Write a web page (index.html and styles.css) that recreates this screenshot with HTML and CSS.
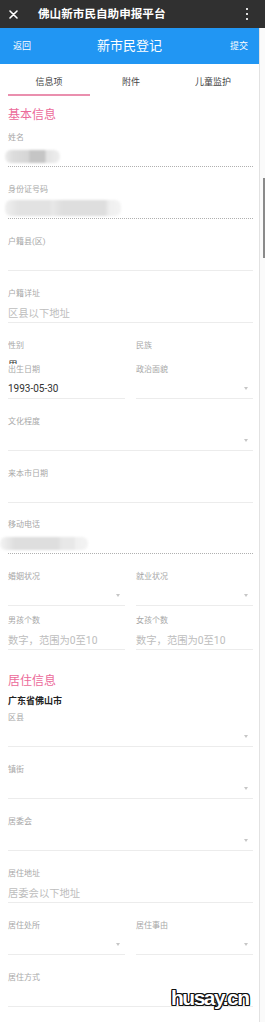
FILE: index.html
```html
<!DOCTYPE html>
<html lang="zh-CN">
<head>
<meta charset="utf-8">
<title>新市民登记</title>
<link rel="stylesheet" href="styles.css">
</head>
<body>
<div class="statusbar">
  <svg class="close" width="9" height="9" viewBox="0 0 9 9"><path d="M1 1L8 8M8 1L1 8" stroke="#fff" stroke-width="1.6" stroke-linecap="round"/></svg>
  <span class="st-title">佛山新市民自助申报平台</span>
  <span class="kebab"><i></i><i></i><i></i></span>
</div>
<div class="page">
  <div class="app">
    <header class="navbar">
      <span class="nav-btn left">返回</span>
      <span class="nav-title">新市民登记</span>
      <span class="nav-btn right">提交</span>
    </header>
    <nav class="tabs">
      <span class="tab active">信息项</span>
      <span class="tab">附件</span>
      <span class="tab">儿童监护</span>
    </nav>
    <main class="form">
      <h2 class="section-title">基本信息</h2>
      <div class="field dotted"><label>姓名</label><div class="input"><span class="blur blur-name"></span></div></div>
      <div class="field dotted"><label>身份证号码</label><div class="input"><span class="blur blur-id"></span></div></div>
      <div class="field"><label>户籍县(区)</label><div class="input"></div></div>
      <div class="field"><label>户籍详址</label><div class="input"><span class="ph">区县以下地址</span></div></div>
      <div class="row clip">
        <div class="field"><label>性别</label><div class="input"><span class="val">男</span></div></div>
        <div class="field"><label>民族</label><div class="input"></div></div>
      </div>
      <div class="row">
        <div class="field"><label>出生日期</label><div class="input"><span class="val">1993-05-30</span></div></div>
        <div class="field"><label>政治面貌</label><div class="input"><span class="caret"></span></div></div>
      </div>
      <div class="field"><label>文化程度</label><div class="input"><span class="caret"></span></div></div>
      <div class="field tight"><label>来本市日期</label><div class="input"></div></div>
      <div class="field dotted"><label>移动电话</label><div class="input"><span class="blur blur-phone"></span></div></div>
      <div class="row compact">
        <div class="field"><label>婚姻状况</label><div class="input"><span class="caret"></span></div></div>
        <div class="field"><label>就业状况</label><div class="input"><span class="caret"></span></div></div>
      </div>
      <div class="row last">
        <div class="field"><label>男孩个数</label><div class="input"><span class="ph">数字，范围为0至10</span></div></div>
        <div class="field"><label>女孩个数</label><div class="input"><span class="ph">数字，范围为0至10</span></div></div>
      </div>
      <h2 class="section-title second">居住信息</h2>
      <div class="city">广东省佛山市</div>
      <div class="field"><label>区县</label><div class="input"><span class="caret"></span></div></div>
      <div class="field"><label>镇街</label><div class="input"><span class="caret"></span></div></div>
      <div class="field"><label>居委会</label><div class="input"><span class="caret"></span></div></div>
      <div class="field"><label>居住地址</label><div class="input"><span class="ph">居委会以下地址</span></div></div>
      <div class="row">
        <div class="field"><label>居住处所</label><div class="input"><span class="caret"></span></div></div>
        <div class="field"><label>居住事由</label><div class="input"><span class="caret"></span></div></div>
      </div>
      <div class="field"><label>居住方式</label><div class="input"><span class="caret"></span></div></div>
    </main>
  </div>
  <div class="edge"><div class="edge-mark"></div></div>
</div>
<div class="watermark">husay.cn</div>
</body>
</html>
```
FILE: styles.css
```css
* { box-sizing: border-box; }
html, body { margin: 0; padding: 0; }
body {
  width: 265px;
  height: 1022px;
  overflow: hidden;
  background: #fff;
  font-family: Roboto, "Noto Sans CJK SC", sans-serif;
  color: #333;
  position: relative;
}
.statusbar {
  height: 28px;
  background: #303030;
  display: flex;
  align-items: center;
  color: #fff;
}
.close { margin-left: 9px; flex: none; }
.st-title {
  margin-left: 20px;
  font-size: 11.6px;
  font-weight: bold;
  letter-spacing: 0;
  line-height: 14px;
}
.kebab {
  margin-left: auto;
  margin-right: 17px;
  display: flex;
  flex-direction: column;
  gap: 3px;
}
.kebab i { display: block; width: 2px; height: 2px; background: #ddd; }
.page { display: flex; }
.app { width: 259px; flex: none; }
.edge {
  width: 6px;
  border-left: 1px solid #e2e2e2;
  background: #fafafa;
}
.edge-mark {
  margin-top: 150px;
  margin-left: 3px;
  width: 2px;
  height: 80px;
  background: #8a8a8a;
}
.navbar {
  height: 36px;
  background: #2196f3;
  display: grid;
  grid-template-columns: 1fr auto 1fr;
  align-items: center;
  color: #fff;
}
.nav-btn { font-size: 9px; line-height: 12px; }
.nav-btn.left { justify-self: start; padding-left: 13px; }
.nav-btn.right { justify-self: end; padding-right: 11px; }
.nav-title { font-size: 13px; line-height: 16px; }
.tabs {
  display: grid;
  grid-template-columns: 82px 82px 82px;
  padding-left: 8px;
  height: 32px;
}
.tab {
  display: flex;
  align-items: center;
  justify-content: center;
  font-size: 9px;
  color: #444;
  padding-top: 4px;
  border-bottom: 2px solid transparent;
}
.tab.active { border-bottom-color: #ea8fae; }
.form { padding: 0 6px 0 8px; }
.section-title {
  margin: 0 0 9px;
  padding-top: 11px;
  font-size: 12px;
  line-height: 16px;
  font-weight: normal;
  color: #ec6a9a;
}
.section-title.second { padding-top: 23px; margin-bottom: 0; }
.city {
  margin: 6px 0 5px;
  font-size: 9px;
  line-height: 12px;
  font-weight: bold;
  color: #222;
}
.field {
  border-bottom: 1px solid #ececec;
  margin-bottom: 17px;
}
.field.dotted { border-bottom: 1px dotted #b0b0b0; }
.field.tight { margin-bottom: 16px; }
.field label {
  display: block;
  font-size: 8px;
  line-height: 11px;
  color: #a8a8a8;
}
.input {
  height: 23px;
  padding-top: 3px;
  display: flex;
  align-items: center;
}
.ph { font-size: 10.3px; color: #bdbdbd; }
.val { font-size: 10px; color: #333; }
.caret {
  margin-left: auto;
  margin-right: 5px;
  width: 0;
  height: 0;
  border-left: 2.5px solid transparent;
  border-right: 2.5px solid transparent;
  border-top: 3px solid #c6c6c6;
}
.row {
  display: grid;
  grid-template-columns: 1fr 1fr;
  column-gap: 11px;
  margin-bottom: 17px;
}
.row .field { margin-bottom: 0; }
.row.clip {
  height: 24px;
  overflow: hidden;
  margin-bottom: 0;
}
.row.clip .field { border-bottom: none; }
.row.compact { margin-bottom: 9px; }
.row.last { margin-bottom: 0; }
.blur {
  display: inline-block;
  border-radius: 6px;
  filter: blur(1px);
}
.blur-name {
  margin-left: -3px;
  width: 55px;
  height: 13px;
  background: linear-gradient(90deg, #ececec 0, #dcdcdc 15%, #d6d6d6 42%, #c5c5c5 46%, #c5c5c5 72%, #e3e3e3 75%, #eeeeee 100%);
}
.blur-id {
  margin-left: -3px;
  width: 116px;
  height: 16px;
  background: linear-gradient(90deg, #f0f0f0 0, #e2e2e2 12%, #e2e2e2 38%, #e8e8e8 41%, #dedede 50%, #dedede 86%, #efefef 90%, #f3f3f3 100%);
}
.blur-phone {
  margin-left: -8px;
  width: 88px;
  height: 13px;
  background: linear-gradient(90deg, #f3f3f3 0, #dedede 17%, #dedede 66%, #e8e8e8 70%, #e8e8e8 84%, #f0f0f0 86%, #f3f3f3 100%);
}
.watermark {
  position: absolute;
  left: 171px;
  top: 986px;
  font-family: "Liberation Sans", Arial, sans-serif;
  font-weight: bold;
  font-size: 21px;
  letter-spacing: -1.5px;
  line-height: 24px;
  color: #fff;
  text-shadow: -1px -1px 0 #111, 1px -1px 0 #111, -1px 1px 0 #111, 1px 1px 0 #111, 0 -1px 0 #111, 0 1px 0 #111, -1px 0 0 #111, 1px 0 0 #111;
}
```
